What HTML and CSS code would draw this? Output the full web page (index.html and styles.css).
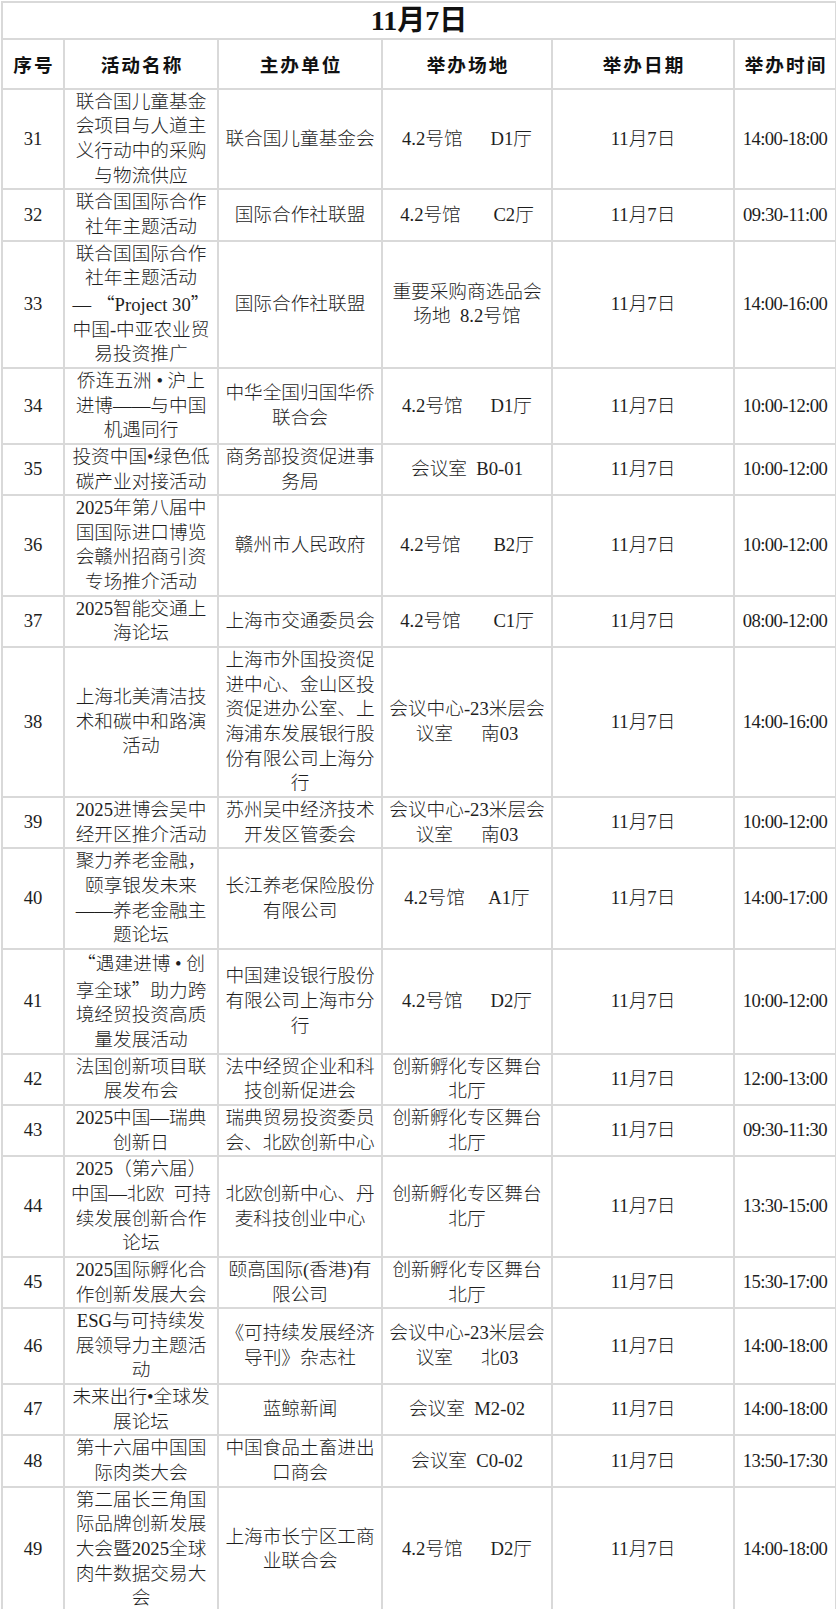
FILE: index.html
```html
<!DOCTYPE html>
<html lang="zh-CN">
<head>
<meta charset="utf-8">
<title>11月7日</title>
<link rel="stylesheet" href="styles.css">
</head>
<body>
<table class="schedule">
  <colgroup>
    <col class="c-no">
    <col class="c-name">
    <col class="c-org">
    <col class="c-venue">
    <col class="c-date">
    <col class="c-time">
  </colgroup>
  <thead>
    <tr><th class="title" colspan="6">11月7日</th></tr>
    <tr class="head">
      <th>序号</th><th>活动名称</th><th>主办单位</th><th>举办场地</th><th>举办日期</th><th>举办时间</th>
    </tr>
  </thead>
  <tbody>
    <tr>
      <td>31</td>
      <td>联合国儿童基金<br>会项目与人道主<br>义行动中的采购<br>与物流供应</td>
      <td>联合国儿童基金会</td>
      <td class="venue">4.2号馆      D1厅</td>
      <td>11月7日</td>
      <td class="time">14:00-18:00</td>
    </tr>
    <tr>
      <td>32</td>
      <td>联合国国际合作<br>社年主题活动</td>
      <td>国际合作社联盟</td>
      <td class="venue">4.2号馆       C2厅</td>
      <td>11月7日</td>
      <td class="time">09:30-11:00</td>
    </tr>
    <tr>
      <td>33</td>
      <td>联合国国际合作<br>社年主题活动<br>— <span class="cjk">“</span>Project 30<span class="cjk">”</span><br>中国-中亚农业贸<br>易投资推广</td>
      <td>国际合作社联盟</td>
      <td class="venue">重要采购商选品会<br>场地  8.2号馆</td>
      <td>11月7日</td>
      <td class="time">14:00-16:00</td>
    </tr>
    <tr>
      <td>34</td>
      <td>侨连五洲 • 沪上<br>进博——与中国<br>机遇同行</td>
      <td>中华全国归国华侨<br>联合会</td>
      <td class="venue">4.2号馆      D1厅</td>
      <td>11月7日</td>
      <td class="time">10:00-12:00</td>
    </tr>
    <tr>
      <td>35</td>
      <td>投资中国•绿色低<br>碳产业对接活动</td>
      <td>商务部投资促进事<br>务局</td>
      <td class="venue">会议室  B0-01</td>
      <td>11月7日</td>
      <td class="time">10:00-12:00</td>
    </tr>
    <tr>
      <td>36</td>
      <td>2025年第八届中<br>国国际进口博览<br>会赣州招商引资<br>专场推介活动</td>
      <td>赣州市人民政府</td>
      <td class="venue">4.2号馆       B2厅</td>
      <td>11月7日</td>
      <td class="time">10:00-12:00</td>
    </tr>
    <tr>
      <td>37</td>
      <td>2025智能交通上<br>海论坛</td>
      <td>上海市交通委员会</td>
      <td class="venue">4.2号馆       C1厅</td>
      <td>11月7日</td>
      <td class="time">08:00-12:00</td>
    </tr>
    <tr>
      <td>38</td>
      <td>上海北美清洁技<br>术和碳中和路演<br>活动</td>
      <td>上海市外国投资促<br>进中心、金山区投<br>资促进办公室、上<br>海浦东发展银行股<br>份有限公司上海分<br>行</td>
      <td class="venue">会议中心-23米层会<br>议室      南03</td>
      <td>11月7日</td>
      <td class="time">14:00-16:00</td>
    </tr>
    <tr>
      <td>39</td>
      <td>2025进博会吴中<br>经开区推介活动</td>
      <td>苏州吴中经济技术<br>开发区管委会</td>
      <td class="venue">会议中心-23米层会<br>议室      南03</td>
      <td>11月7日</td>
      <td class="time">10:00-12:00</td>
    </tr>
    <tr>
      <td>40</td>
      <td>聚力养老金融，<br>颐享银发未来<br>——养老金融主<br>题论坛</td>
      <td>长江养老保险股份<br>有限公司</td>
      <td class="venue">4.2号馆     A1厅</td>
      <td>11月7日</td>
      <td class="time">14:00-17:00</td>
    </tr>
    <tr>
      <td>41</td>
      <td><span class="cjk">“</span>遇建进博 • 创<br>享全球<span class="cjk">”</span>助力跨<br>境经贸投资高质<br>量发展活动</td>
      <td>中国建设银行股份<br>有限公司上海市分<br>行</td>
      <td class="venue">4.2号馆      D2厅</td>
      <td>11月7日</td>
      <td class="time">10:00-12:00</td>
    </tr>
    <tr>
      <td>42</td>
      <td>法国创新项目联<br>展发布会</td>
      <td>法中经贸企业和科<br>技创新促进会</td>
      <td class="venue">创新孵化专区舞台<br>北厅</td>
      <td>11月7日</td>
      <td class="time">12:00-13:00</td>
    </tr>
    <tr>
      <td>43</td>
      <td>2025中国—瑞典<br>创新日</td>
      <td>瑞典贸易投资委员<br>会、北欧创新中心</td>
      <td class="venue">创新孵化专区舞台<br>北厅</td>
      <td>11月7日</td>
      <td class="time">09:30-11:30</td>
    </tr>
    <tr>
      <td>44</td>
      <td>2025（第六届）<br>中国—北欧&nbsp; 可持<br>续发展创新合作<br>论坛</td>
      <td>北欧创新中心、丹<br>麦科技创业中心</td>
      <td class="venue">创新孵化专区舞台<br>北厅</td>
      <td>11月7日</td>
      <td class="time">13:30-15:00</td>
    </tr>
    <tr>
      <td>45</td>
      <td>2025国际孵化合<br>作创新发展大会</td>
      <td>颐高国际(香港)有<br>限公司</td>
      <td class="venue">创新孵化专区舞台<br>北厅</td>
      <td>11月7日</td>
      <td class="time">15:30-17:00</td>
    </tr>
    <tr>
      <td>46</td>
      <td>ESG与可持续发<br>展领导力主题活<br>动</td>
      <td>《可持续发展经济<br>导刊》杂志社</td>
      <td class="venue">会议中心-23米层会<br>议室      北03</td>
      <td>11月7日</td>
      <td class="time">14:00-18:00</td>
    </tr>
    <tr>
      <td>47</td>
      <td>未来出行•全球发<br>展论坛</td>
      <td>蓝鲸新闻</td>
      <td class="venue">会议室  M2-02</td>
      <td>11月7日</td>
      <td class="time">14:00-18:00</td>
    </tr>
    <tr>
      <td>48</td>
      <td>第十六届中国国<br>际肉类大会</td>
      <td>中国食品土畜进出<br>口商会</td>
      <td class="venue">会议室  C0-02</td>
      <td>11月7日</td>
      <td class="time">13:50-17:30</td>
    </tr>
    <tr>
      <td>49</td>
      <td>第二届长三角国<br>际品牌创新发展<br>大会暨2025全球<br>肉牛数据交易大<br>会</td>
      <td>上海市长宁区工商<br>业联合会</td>
      <td class="venue">4.2号馆      D2厅</td>
      <td>11月7日</td>
      <td class="time">14:00-18:00</td>
    </tr>
  </tbody>
</table>
</body>
</html>
```

FILE: styles.css
```css
html, body {
  margin: 0;
  padding: 0;
  background: #ffffff;
}

body {
  padding: 1px 0 0 1px;
}

.schedule {
  border-collapse: collapse;
  table-layout: fixed;
  width: 834px;
  font-family: "Liberation Serif", "Noto Sans CJK SC", serif;
  font-size: 18.67px;
  font-weight: 300;
  line-height: 24.65px;
  color: #1e1e1e;
}

.c-no { width: 62px; }
.c-name { width: 154px; }
.c-org { width: 164px; }
.c-venue { width: 170px; }
.c-date { width: 182px; }
.c-time { width: 102px; }

.schedule th,
.schedule td {
  border: 2px solid #d9d9d9;
  padding: 0 1px;
  text-align: center;
  vertical-align: middle;
  white-space: nowrap;
}

.schedule .title {
  font-family: "Liberation Serif", "Noto Sans CJK SC", serif;
  font-size: 28px;
  font-weight: 700;
  line-height: 34px;
  padding: 1px 0 0;
  color: #111;
}

.schedule .head th {
  font-family: "Noto Sans CJK SC", sans-serif;
  font-weight: 700;
  font-size: 18.67px;
  letter-spacing: 2px;
  padding: 12px 0 11px 2px;
  color: #111;
}

.schedule .venue {
  white-space: pre;
}

.schedule .time {
  letter-spacing: -0.6px;
}

.cjk {
  font-family: "Noto Sans CJK SC", sans-serif;
}
```
